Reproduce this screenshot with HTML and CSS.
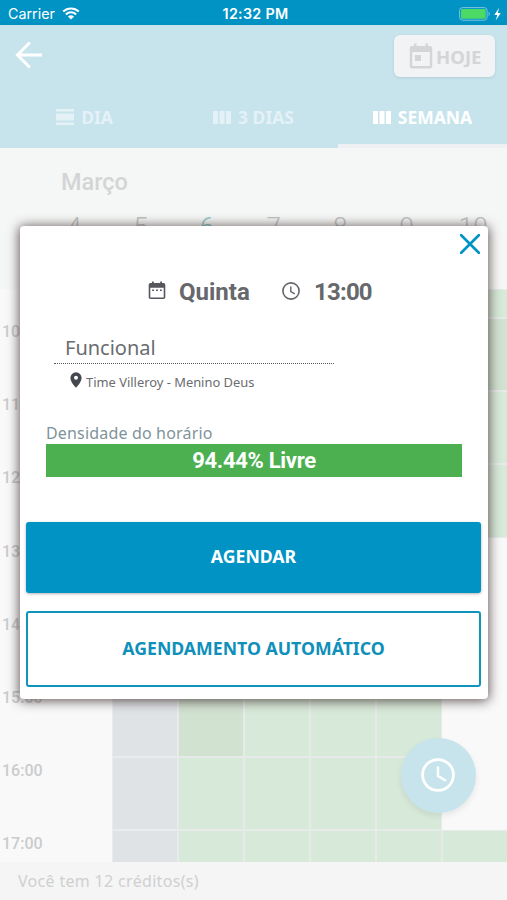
FILE: index.html
```html
<!DOCTYPE html>
<html lang="pt-BR">
<head>
    <meta charset="UTF-8">
    <meta name="viewport" content="width=device-width, initial-scale=1.0">
    <title>Agenda</title>
    <link rel="stylesheet" href="styles.css">
</head>
<body>
    <div class="status-bar">
        <div class="carrier">
            <span>Carrier</span>
            <svg class="wifi" viewBox="0 0 18 13" width="18" height="13">
                <path d="M1.2 4.6a11.2 11.2 0 0 1 15.6 0M3.9 7.4a7.3 7.3 0 0 1 10.2 0" fill="none" stroke="#fff" stroke-width="2.1"/>
                <path d="M9 12.6 5.9 9.6a4.6 4.6 0 0 1 6.2 0z" fill="#fff"/>
            </svg>
        </div>
        <span class="clock">12:32 PM</span>
        <div class="battery">
            <svg viewBox="0 0 44 14" width="44" height="14">
                <rect x=".6" y=".6" width="27.5" height="12.6" rx="3" fill="none" stroke="#7cc5df" stroke-width="1"/>
                <rect x="2" y="2" width="24.7" height="9.8" rx="1.4" fill="#4cd964"/>
                <path d="M29.6 4.8c1.6.5 1.6 3.7 0 4.2z" fill="#7cc5df"/>
                <path d="M40.2.8 35.3 8h3l-1.6 5.4L41.8 6h-3.1z" fill="#fff"/>
            </svg>
        </div>
    </div>

    <header class="app-bar">
        <div class="toolbar">
            <svg class="back" viewBox="0 0 28 28" width="28" height="28">
                <path d="M14.8 1.500 2.500 14l12.300 12.500M2.800 14H27" fill="none" stroke="#fff" stroke-width="3"/>
            </svg>
            <button class="today">
                <svg viewBox="0 0 24 26" width="24" height="26">
                    <path d="M3 3h2V.5h2.5V3h9V.5H19V3h2a2.2 2.2 0 0 1 2.2 2.2v18A2.2 2.2 0 0 1 21 25.4H3a2.200 2.200 0 0 1-2.200-2.200v-18A2.200 2.200 0 0 1 3 3zm.2 6v14h17.600V9zM6 12h6v6H6z" fill="#d3d5d6" fill-rule="evenodd"/>
                </svg>
                <span>HOJE</span>
            </button>
        </div>
        <nav class="tabs">
            <div class="tab">
                <svg viewBox="0 0 18 18" width="18" height="18">
                    <path d="M0 1h18v2.500H0zM0 5.500h18v7H0zM0 14.500h18V17H0z" fill="currentColor"/>
                </svg>
                <span>DIA</span>
            </div>
            <div class="tab">
                <svg viewBox="0 0 18 18" width="18" height="18">
                    <path d="M0 3h5v13H0zM6.500 3h5v13h-5zM13 3h5v13h-5z" fill="currentColor"/>
                </svg>
                <span>3 DIAS</span>
            </div>
            <div class="tab active">
                <svg viewBox="0 0 18 18" width="18" height="18">
                    <path d="M0 3h5v13H0zM6.500 3h5v13h-5zM13 3h5v13h-5z" fill="currentColor"/>
                </svg>
                <span>SEMANA</span>
            </div>
        </nav>
    </header>

    <section class="week-head">
        <h2>Março</h2>
        <div class="days">
            <span>4</span>
            <span>5</span>
            <span class="current">6</span>
            <span>7</span>
            <span>8</span>
            <span>9</span>
            <span>10</span>
        </div>
    </section>

    <main class="grid">
        <div class="row first">
            <span class="hour"></span><i class="off"></i><i class="free"></i><i class="free"></i><i class="free"></i><i class="free"></i><i class="free"></i>
        </div>
        <div class="row">
            <span class="hour">10:00</span><i class="off"></i><i class="free"></i><i class="free"></i><i class="free"></i><i class="free"></i><i class="busy"></i>
        </div>
        <div class="row">
            <span class="hour">11:00</span><i class="off"></i><i class="free"></i><i class="free"></i><i class="free"></i><i class="free"></i><i class="free"></i>
        </div>
        <div class="row">
            <span class="hour">12:00</span><i class="off"></i><i class="free"></i><i class="free"></i><i class="free"></i><i class="free"></i><i class="free"></i>
        </div>
        <div class="row">
            <span class="hour">13:00</span><i class="off"></i><i class="free"></i><i class="free"></i><i class="free"></i><i class="free"></i><i></i>
        </div>
        <div class="row">
            <span class="hour">14:00</span><i class="off"></i><i class="free"></i><i class="free"></i><i class="free"></i><i class="free"></i><i></i>
        </div>
        <div class="row">
            <span class="hour">15:00</span><i class="off"></i><i class="busy"></i><i class="free"></i><i class="free"></i><i class="free"></i><i></i>
        </div>
        <div class="row">
            <span class="hour">16:00</span><i class="off"></i><i class="free"></i><i class="free"></i><i class="free"></i><i class="free"></i><i></i>
        </div>
        <div class="row">
            <span class="hour">17:00</span><i class="off"></i><i class="free"></i><i class="free"></i><i class="free"></i><i class="free"></i><i class="free"></i>
        </div>
    </main>

    <footer class="credits">Você tem 12 créditos(s)</footer>

    <button class="fab">
        <svg viewBox="0 0 34 34" width="34" height="34">
            <circle cx="17" cy="17" r="15.400" fill="none" stroke="#fff" stroke-width="2.800"/>
            <path d="M17 8.500V18l8 4.800" fill="none" stroke="#fff" stroke-width="2.400"/>
        </svg>
    </button>

    <div class="modal">
        <button class="close">
            <svg viewBox="0 0 20 20" width="20" height="20">
                <path d="M1.200 1.200l17.600 17.600M18.800 1.200 1.200 18.800" stroke="#0093c4" stroke-width="2.700" stroke-linecap="round"/>
            </svg>
        </button>
        <div class="when">
            <svg class="cal" viewBox="0 0 18 19" width="18" height="19">
                <path d="M2.500 2H4V.5h1.800V2h6.400V.5H14V2h1.500A1.800 1.800 0 0 1 17.300 3.800v12.400a1.800 1.800 0 0 1-1.800 1.800h-13A1.800 1.800 0 0 1 .7 16.200V3.800A1.800 1.800 0 0 1 2.500 2zm-.2 4.800v9.600h13.400V6.800zM4.200 8.600H6v1.500H4.200zM8.100 8.600h1.800v1.500H8.100zM12 8.600h1.800v1.500H12z" fill="#55575d" fill-rule="evenodd"/>
            </svg>
            <span class="day">Quinta</span>
            <svg class="watch" viewBox="0 0 18 18" width="18" height="18">
                <circle cx="9" cy="9" r="8.100" fill="none" stroke="#63656a" stroke-width="1.600"/>
                <path d="M8.800 4.500v5l4 2.400" fill="none" stroke="#63656a" stroke-width="1.400"/>
            </svg>
            <span class="time">13:00</span>
        </div>
        <div class="activity">Funcional</div>
        <div class="place">
            <svg viewBox="0 0 12 16" width="12" height="16">
                <path d="M6 .3A5.600 5.600 0 0 0 .4 5.900C.4 10 6 15.700 6 15.700S11.600 10 11.600 5.900A5.600 5.600 0 0 0 6 .3zm0 3.500a2 2 0 1 1 0 4 2 2 0 0 1 0-4z" fill="#44474d" fill-rule="evenodd"/>
            </svg>
            <span>Time Villeroy - Menino Deus</span>
        </div>
        <div class="density-label">Densidade do horário</div>
        <div class="density">94.44% Livre</div>
        <button class="btn primary"><span>AGENDAR</span></button>
        <button class="btn outline"><span>AGENDAMENTO AUTOMÁTICO</span></button>
    </div>
</body>
</html>
```
FILE: styles.css
```css
* {
    margin: 0;
    padding: 0;
    box-sizing: border-box;
}
body {
    position: relative;
    display: flex;
    flex-direction: column;
    height: 900px;
    overflow: hidden;
    background-color: #f9f9f9;
    font-family: "Noto Sans", "Open Sans", sans-serif;
}
button {
    border: none;
    font-family: inherit;
}
svg {
    display: block;
    flex: none;
}

/* status bar */
.status-bar {
    display: grid;
    grid-template-columns: 1fr auto 1fr;
    align-items: center;
    height: 25px;
    padding: 2px 4px 0 8px;
    background-color: #0093c4;
    color: #fff;
    font-family: Inter, sans-serif;
    font-size: 14.3px;
}
.carrier {
    display: flex;
    align-items: center;
    gap: 7px;
}
.clock {
    font-weight: 600;
    letter-spacing: .3px;
}
.battery {
    justify-self: end;
}

/* top bar */
.app-bar {
    height: 123px;
    background-color: #c7e4ed;
    box-shadow: 0 1px 5px rgba(0, 0, 0, .08);
}
.toolbar {
    display: flex;
    justify-content: space-between;
    align-items: flex-start;
    height: 62px;
    padding: 10px 12px 0 15px;
}
.back {
    margin-top: 6px;
}
.today {
    display: flex;
    align-items: center;
    gap: 3px;
    width: 101px;
    height: 42px;
    padding-left: 15px;
    border-radius: 6px;
    background-color: #f1f3f4;
    box-shadow: 0 1px 3px rgba(0, 0, 0, .1);
    color: #d3d5d6;
    font-size: 18.6px;
    font-weight: 700;
}
.tabs {
    display: grid;
    grid-template-columns: repeat(3, 1fr);
    height: 61px;
}
.tab {
    display: flex;
    justify-content: center;
    align-items: center;
    gap: 7px;
    padding-top: 3px;
    border-bottom: 4px solid transparent;
    color: #e4f1f6;
    font-size: 17.5px;
    font-weight: 700;
}
.tab.active {
    border-bottom-color: #eff0f3;
    color: #fff;
}

/* month + days */
.week-head {
    height: 141px;
    padding: 17px 0 0 41px;
    background-color: #f5f7f6;
    font-family: Roboto, sans-serif;
}
.week-head h2 {
    padding-left: 20px;
    color: #d3d5d5;
    font-size: 23.5px;
    font-weight: 500;
    line-height: 34px;
}
.days {
    display: grid;
    grid-template-columns: repeat(7, 66.5px);
    margin-top: 13px;
    color: #bfc1c1;
    font-size: 26px;
    font-weight: 300;
    text-align: center;
}
.days .current {
    color: #8cc5c5;
}

/* hours grid */
.grid {
    height: 573px;
    overflow: hidden;
}
.row {
    display: grid;
    grid-template-columns: 112px repeat(6, 66px);
    height: 73.2px;
}
.row.first {
    height: 29px;
}
.hour {
    padding: 4px 0 0 2px;
    color: #cbcccd;
    font-family: Roboto, sans-serif;
    font-size: 16px;
    font-weight: 500;
}
.row i {
    border: 1px solid transparent;
}
.row i.off {
    background-color: #dfe3e6;
    border-color: #e9eced;
}
.row i.free {
    background-color: #d7e9d8;
    border-color: #e6ebe9;
}
.row i.busy {
    background-color: #d1e2d1;
    border-color: #e6ebe9;
}
.credits {
    height: 38px;
    padding-left: 18px;
    background-color: #f5f5f5;
    color: #cfd0d1;
    font-size: 16px;
    letter-spacing: .32px;
    line-height: 38px;
}
.fab {
    position: absolute;
    left: 401px;
    top: 738px;
    display: flex;
    justify-content: center;
    align-items: center;
    width: 75px;
    height: 75px;
    padding: 0 2px 1px 0;
    border-radius: 50%;
    background-color: #c7e4ed;
    box-shadow: 0 3px 6px rgba(0, 0, 0, .08);
}

/* booking dialog */
.modal {
    position: absolute;
    left: 20px;
    top: 226px;
    display: flex;
    flex-direction: column;
    width: 468px;
    height: 473px;
    padding: 51px 7px 0 6px;
    border-radius: 4px;
    background-color: #fff;
    box-shadow: 0 1px 12px 1px rgba(50, 35, 35, .75);
    color: #6a6c70;
}
.close {
    position: absolute;
    right: 8px;
    top: 8px;
    background: none;
}
.when {
    display: flex;
    align-items: center;
    height: 30px;
    padding-left: 122px;
    color: #66686c;
    font-family: Roboto, sans-serif;
    font-size: 24px;
    font-weight: 700;
}
.cal,
.watch {
    margin-top: -3px;
}
.day {
    width: 116px;
    padding-left: 13px;
}
.time {
    padding-left: 14px;
    letter-spacing: -.8px;
}
.activity {
    width: 280px;
    height: 36px;
    margin: 21px 0 0 28px;
    padding: 6px 0 0 11px;
    border-bottom: 1px dotted #55575a;
    font-size: 20px;
    line-height: 27px;
}
.place {
    display: flex;
    align-items: center;
    gap: 4px;
    height: 20px;
    margin: 8px 0 0 44px;
    font-size: 12.9px;
}
.place svg {
    margin-top: -4px;
}
.density-label {
    margin: 30px 0 0 20px;
    color: #7f9399;
    font-size: 16px;
    letter-spacing: .17px;
    line-height: 22px;
}
.density {
    width: 416px;
    height: 33px;
    margin-left: 20px;
    background-color: #4caf50;
    color: #fff;
    font-family: Roboto, sans-serif;
    font-size: 22px;
    font-weight: 700;
    letter-spacing: -.3px;
    line-height: 34px;
    text-align: center;
}
.btn {
    width: 455px;
    padding-bottom: 3px;
    border-radius: 3px;
    font-size: 17.7px;
    font-weight: 700;
}
.primary {
    height: 71px;
    margin-top: 45px;
    background-color: #0093c4;
    box-shadow: 0 1px 3px rgba(0, 0, 0, .3);
    color: #fff;
}
.outline {
    height: 76px;
    margin-top: 18px;
    border: 2.5px solid #0f94bd;
    background-color: #fff;
    color: #0f90ba;
}
```
